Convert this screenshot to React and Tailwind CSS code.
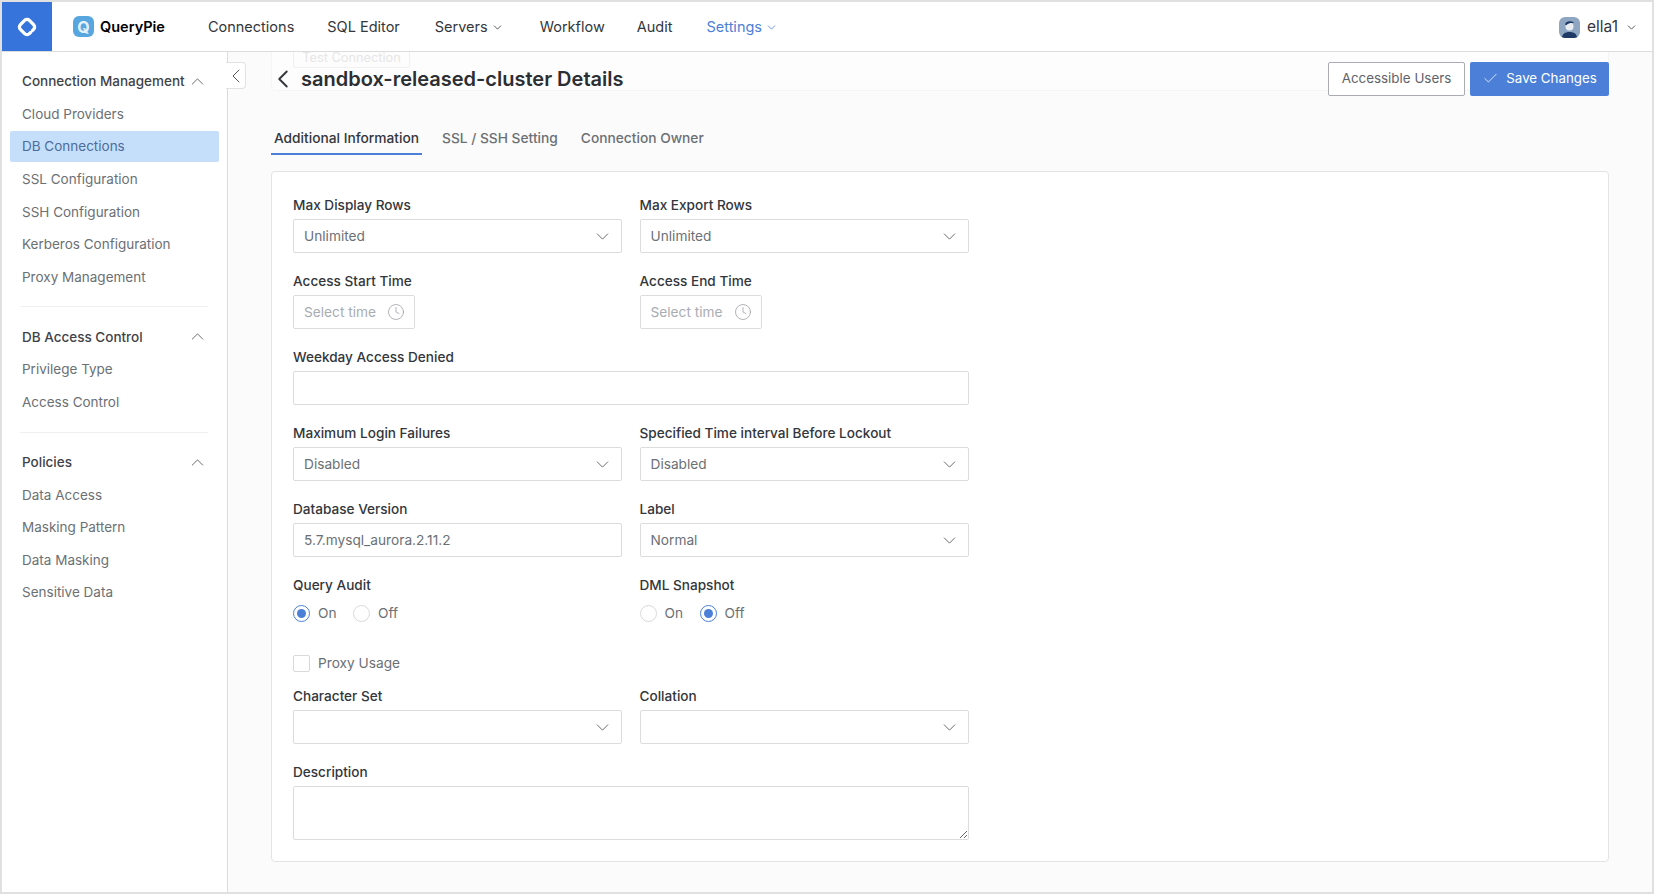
import { Check, ChevronDown, ChevronLeft, ChevronUp, Clock } from 'lucide-react';

const sections = [
  {
    title: 'Connection Management',
    items: ['Cloud Providers', 'DB Connections', 'SSL Configuration', 'SSH Configuration', 'Kerberos Configuration', 'Proxy Management'],
  },
  { title: 'DB Access Control', items: ['Privilege Type', 'Access Control'] },
  { title: 'Policies', items: ['Data Access', 'Masking Pattern', 'Data Masking', 'Sensitive Data'] },
];

function Logo() {
  return (
    <svg width="24" height="24" viewBox="0 0 24 24" fill="none">
      <path
        d="M15.6 17.4 14.4 18.6A3.4 3.4 0 0 1 9.6 18.6L5.4 14.4A3.4 3.4 0 0 1 5.4 9.6L9.6 5.4A3.4 3.4 0 0 1 14.4 5.4L18.6 9.6A3.4 3.4 0 0 1 18.6 14.4L17.6 15.4"
        stroke="#fff"
        strokeWidth="3.3"
        strokeLinecap="round"
      />
    </svg>
  );
}

function Avatar() {
  return (
    <svg width="21" height="21" viewBox="0 0 21 21" className="rounded-[6px]">
      <rect width="21" height="21" fill="#8fa6c2" />
      <path d="M3 21c0-4 3-6 7.5-6s7.5 2 7.5 6z" fill="#1f3a66" />
      <circle cx="10.5" cy="9.5" r="4" fill="#e9edf2" />
      <path d="M6 7.5c.5-2.5 3-3.5 5.5-3.2 1.6.2 3 .8 3.3 1.7-2.6-.3-5.8.1-7.6 2.2z" fill="#1f3a66" />
    </svg>
  );
}

function Field({ label, children }) {
  return (
    <div>
      <div className="text-[13.6px] leading-[20px] font-medium text-[#33363b] mb-1">{label}</div>
      {children}
    </div>
  );
}

function Select({ value }) {
  return (
    <div className="h-[34px] flex items-center justify-between bg-white border border-[#dcdcdc] rounded-[2px] pl-[10px] pr-[8px] text-[13.7px] text-[#6b7075]">
      <span>{value}</span>
      <ChevronDown size={21} strokeWidth={1} className="text-[#55595f]" />
    </div>
  );
}

function TimeInput() {
  return (
    <div className="w-[122px] h-[34px] flex items-center justify-between bg-white border border-[#dcdcdc] rounded-[2px] pl-[10px] pr-[9px] text-[13.7px] text-[#a9adb3]">
      <span>Select time</span>
      <Clock size={18} strokeWidth={0.9} className="text-[#8d9196]" />
    </div>
  );
}

function Radio({ checked, label }) {
  return (
    <div className="flex items-center gap-2">
      {checked ? (
        <span className="w-[17px] h-[17px] rounded-full border border-[#4c7fd8] bg-white flex items-center justify-center">
          <span className="w-[9px] h-[9px] rounded-full bg-[#4c7fd8]" />
        </span>
      ) : (
        <span className="w-[17px] h-[17px] rounded-full border border-[#d9d9d9] bg-white" />
      )}
      <span className="text-[13.7px] leading-[17px] text-[#6b7075] w-[35px]">{label}</span>
    </div>
  );
}

function Sidebar() {
  return (
    <aside className="relative w-[226px] shrink-0 border-r border-[#dcdcdc] bg-white pt-[13px]">
      {sections.map((section, i) => (
        <div key={section.title}>
          {i > 0 && <div className="h-px bg-[#f0f0f0] ml-[18px] mr-[19px] my-[13.25px]" />}
          <div className="h-[32.6px] flex items-center justify-between pl-5 pr-[19px] text-[13.5px] font-medium text-[#3f4348] whitespace-nowrap">
            <span>{section.title}</span>
            <ChevronUp size={21} strokeWidth={1} className="text-[#55595f]" />
          </div>
          {section.items.map((item) => (
            <div key={item} className="h-[32.6px] flex items-center">
              {item === 'DB Connections' ? (
                <div className="w-full h-[31px] mx-2 pl-3 flex items-center rounded-[2px] bg-[#c5dffa] text-[13.5px] text-[#4d6c9c]">
                  {item}
                </div>
              ) : (
                <div className="pl-5 text-[13.5px] text-[#6b7075]">{item}</div>
              )}
            </div>
          ))}
        </div>
      ))}
      <button className="absolute left-[224px] top-[10px] w-[20px] h-[27px] flex items-center justify-center bg-white border border-[#e2e2e2] border-l-0 rounded-r-[4px]">
        <ChevronLeft size={24} strokeWidth={1} className="shrink-0 text-[#55595f]" />
      </button>
    </aside>
  );
}

export default function App() {
  return (
    <div className="w-screen h-screen flex flex-col overflow-hidden border-2 border-[#e0e0e0] bg-[#fbfbfb] font-['Inter',sans-serif]">
      <header className="h-[50px] shrink-0 flex items-center bg-white border-b border-[#dcdcdc]">
        <div className="w-[50px] h-full flex items-center justify-center bg-[#3674dc]">
          <Logo />
        </div>
        <div className="ml-[21px] w-[21px] h-[21px] rounded-[6px] bg-[#57a6df] flex items-center justify-center text-[#e4f1fa] text-[16px] font-bold leading-none">
          Q
        </div>
        <div className="ml-[6px] pt-px text-[14.5px] font-semibold text-black">QueryPie</div>
        <nav className="flex items-center pt-px text-[14.5px] text-[#33363b]">
          <span className="ml-[43px]">Connections</span>
          <span className="ml-[33px]">SQL Editor</span>
          <span className="ml-[35px] flex items-center gap-[3px]">
            Servers <ChevronDown size={13} strokeWidth={1.5} />
          </span>
          <span className="ml-[36px]">Workflow</span>
          <span className="ml-[32px]">Audit</span>
          <span className="ml-[34px] flex items-center gap-[3px] text-[#4c7fd8]">
            Settings <ChevronDown size={13} strokeWidth={1.5} />
          </span>
        </nav>
        <div className="ml-auto mr-[14px] pt-px flex items-center gap-[7px] text-[15.5px] text-[#33363b]">
          <Avatar />
          <span>ella1</span>
          <ChevronDown size={13} strokeWidth={1.5} />
        </div>
      </header>

      <div className="flex-1 flex min-h-0">
        <Sidebar />
        <main className="flex-1 min-w-0 pl-[43px] pr-[43px]">
          <div className="relative h-[39px] flex items-center pt-[16px] bg-[#fdfdfd] border border-t-0 border-[#f5f5f5] rounded-b-[4px]">
            <div className="absolute left-[21px] top-0 w-[117px] h-[16px] pb-[3px] flex items-center justify-center border border-t-0 border-[#f0f0f0] rounded-b-[2px] text-[12.75px] text-[#e6e6e6]">
              Test Connection
            </div>
            <ChevronLeft size={30} strokeWidth={1.5} className="relative -ml-[4px] shrink-0 text-[#33363b]" />
            <h1 className="relative ml-[3px] text-[20px] font-semibold text-[#2b2e32]">sandbox-released-cluster Details</h1>
            <div className="relative ml-auto mr-[-1px] mt-[-1px] flex gap-[5px]">
              <button className="w-[137px] h-[34px] bg-white border border-[#a9adb3] rounded-[2px] text-[13.4px] text-[#5f6369]">
                Accessible Users
              </button>
              <button className="w-[139px] h-[34px] flex items-center justify-center gap-[7px] bg-[#4c7fd8] rounded-[2px] text-[13.3px] text-white">
                <Check size={17} strokeWidth={1.1} />
                Save Changes
              </button>
            </div>
          </div>

          <div className="flex mt-[22px] text-[13.75px] font-medium">
            <div className="w-[151px] h-[42px] pt-[11px] flex items-center justify-center text-[#33363b] border-b-2 border-[#4c7fd8]">
              Additional Information
            </div>
            <div className="ml-[20px] h-[42px] pt-[11px] pb-[2px] flex items-center text-[#6b7075]">SSL / SSH Setting</div>
            <div className="ml-[23px] h-[42px] pt-[11px] pb-[2px] flex items-center text-[#6b7075]">Connection Owner</div>
          </div>

          <div className="mt-[16px] h-[691px] bg-white border border-[#e3e3e3] rounded-[4px] pt-[23px] pl-[21px]">
            <div className="w-[676px] grid grid-cols-[329px_329.5px] gap-x-[17.5px] gap-y-[18px]">
              <Field label="Max Display Rows"><Select value="Unlimited" /></Field>
              <Field label="Max Export Rows"><Select value="Unlimited" /></Field>
              <Field label="Access Start Time"><TimeInput /></Field>
              <Field label="Access End Time"><TimeInput /></Field>
              <div className="col-span-2">
                <Field label="Weekday Access Denied">
                  <div className="h-[34px] bg-white border border-[#dcdcdc] rounded-[2px]" />
                </Field>
              </div>
              <Field label="Maximum Login Failures"><Select value="Disabled" /></Field>
              <Field label="Specified Time interval Before Lockout"><Select value="Disabled" /></Field>
              <Field label="Database Version">
                <div className="h-[34px] flex items-center bg-white border border-[#dcdcdc] rounded-[2px] pl-[10px] text-[13.7px] text-[#6b7075]">
                  5.7.mysql_aurora.2.11.2
                </div>
              </Field>
              <Field label="Label"><Select value="Normal" /></Field>
              <div>
                <div className="text-[13.6px] leading-[20px] font-medium text-[#33363b]">Query Audit</div>
                <div className="flex mt-[10px]">
                  <Radio checked label="On" />
                  <Radio label="Off" />
                </div>
              </div>
              <div>
                <div className="text-[13.6px] leading-[20px] font-medium text-[#33363b]">DML Snapshot</div>
                <div className="flex mt-[10px]">
                  <Radio label="On" />
                  <Radio checked label="Off" />
                </div>
              </div>
              <div className="col-span-2 flex items-center gap-2 mt-[15px] mb-[-4px]">
                <span className="w-[17px] h-[17px] border border-[#d9d9d9] bg-white rounded-[2px]" />
                <span className="text-[13.7px] leading-[17px] text-[#6b7075]">Proxy Usage</span>
              </div>
              <Field label="Character Set"><Select value="" /></Field>
              <Field label="Collation"><Select value="" /></Field>
              <div className="col-span-2">
                <Field label="Description">
                  <textarea className="block w-full h-[54px] bg-white border border-[#dcdcdc] rounded-[2px] resize" />
                </Field>
              </div>
            </div>
          </div>
        </main>
      </div>
    </div>
  );
}
